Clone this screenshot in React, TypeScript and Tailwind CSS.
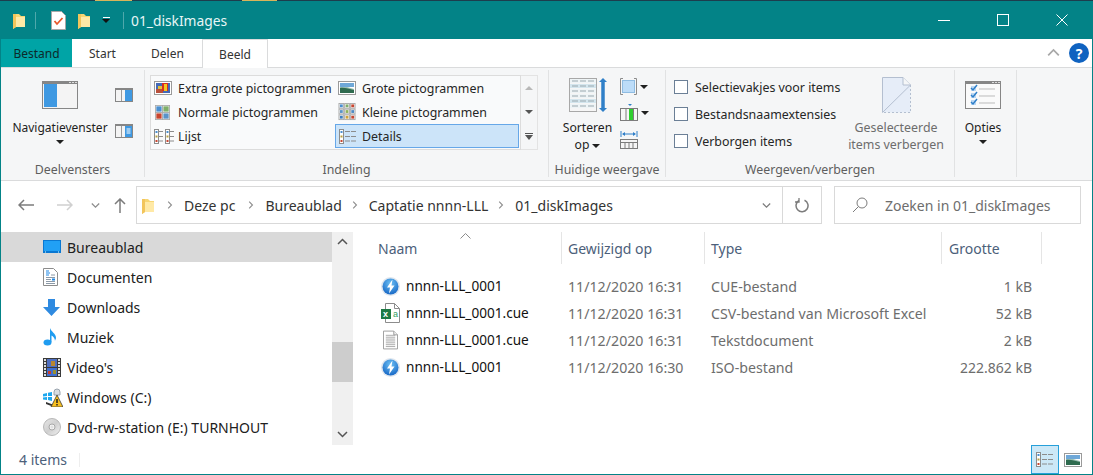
import type { ReactNode } from 'react'

const CARET = 'w-0 h-0 border-x-[4px] border-x-transparent border-t-[4px] border-t-[#202020]'

function Caret({ className = '' }: { className?: string }) {
  return <span className={`${CARET} ${className}`} />
}

function Folder({ w = 12, h = 17 }: { w?: number; h?: number }) {
  return (
    <svg width={w} height={h} viewBox="0 0 12 17" className="shrink-0">
      <path d="M0 2h6l2 2h4v11H3l-3 2z" fill="#f7d674" />
      <path d="M3 5h9v10H3z" fill="#ffe9a6" />
      <path d="M0 2h3v13l-3 2z" fill="#f2c55c" />
    </svg>
  )
}

function NavPane() {
  return (
    <svg width="36" height="28" viewBox="0 0 36 28">
      <rect x="0.5" y="0.5" width="35" height="27" fill="#f4f4f4" stroke="#868686" />
      <rect x="0" y="0" width="36" height="3" fill="#868686" />
      <rect x="27" y="1" width="2" height="1" fill="#ddd" />
      <rect x="30" y="1" width="2" height="1" fill="#ddd" />
      <rect x="33" y="1" width="2" height="1" fill="#ddd" />
      <rect x="2" y="3" width="13" height="23" fill="#3f99e2" />
    </svg>
  )
}

function PaneSmall({ lines }: { lines?: boolean }) {
  return (
    <svg width="18" height="14" viewBox="0 0 18 14">
      <rect x="0.5" y="0.5" width="17" height="13" fill="#f4f4f4" stroke="#868686" />
      <rect x="0" y="0" width="18" height="2" fill="#868686" />
      <rect x="6" y="2" width="1" height="11" fill="#9a9a9a" />
      <rect x="10" y="2" width="7" height="11" fill="#3f99e2" />
      {lines && <path d="M11.5 5h4M11.5 7h4M11.5 9h4" stroke="#fff" />}
    </svg>
  )
}

function Extra() {
  return (
    <svg width="18" height="14" viewBox="0 0 18 14">
      <rect x="0.5" y="0.5" width="17" height="13" fill="#fff" stroke="#9a9a9a" />
      <rect x="2" y="2" width="14" height="10" fill="#4469b8" />
      <rect x="2" y="8" width="7" height="4" fill="#b9503c" />
      <rect x="8" y="2" width="6" height="8" fill="#d82f1f" />
      <rect x="10" y="3" width="3" height="7" fill="#f2c81e" />
      <rect x="4" y="5" width="4" height="3" fill="#e3c13a" />
    </svg>
  )
}

function Tiles({ n }: { n: number }) {
  const colors = ['#4a8fd0', '#7fae6a', '#c8452f', '#5a93c8', '#8fb35a', '#4d8ac4', '#3f7fbf', '#d0a33a', '#c8452f']
  const size = n === 2 ? 7 : 4
  const step = n === 2 ? 8 : 6
  const cells: ReactNode[] = []
  for (let r = 0; r < n; r++) {
    for (let c = 0; c < n; c++) {
      cells.push(
        <g key={`${r}-${c}`}>
          <rect x={c * step + 0.5} y={r * step + 0.5} width={size + 1} height={size + 1} fill="#fff" stroke="#aaa" />
          <rect x={c * step + 1.5} y={r * step + 1.5} width={size - 1} height={size - 1} fill={colors[(r * n + c) % 9]} />
        </g>,
      )
    }
  }
  const dim = n === 2 ? 17 : 19
  return (
    <svg width={dim} height={dim - (n === 2 ? 2 : 1)} viewBox={`0 0 ${dim} ${dim}`}>
      {cells}
    </svg>
  )
}

function MiniCol({ x, dash }: { x: number; dash?: boolean }) {
  const cols = ['#4a8fd0', '#b8a040', '#c8452f']
  return (
    <g>
      <rect x={x + 0.5} y="0.5" width="4" height="14" fill="#fff" stroke="#8c8c8c" />
      {cols.map((c, i) => (
        <rect key={c} x={x + 1.5} y={2 + i * 4.5} width="2" height="2" fill={c} />
      ))}
      {[2.5, 7.5, 12].map((y) => (
        <path key={y} d={dash ? `M${x + 6} ${y}h5M${x + 12} ${y}h5` : `M${x + 5} ${y}h4`} stroke="#8c8c8c" />
      ))}
    </g>
  )
}

function ListIcon() {
  return (
    <svg width="20" height="15" viewBox="0 0 20 15">
      <MiniCol x={0} />
      <MiniCol x={11} />
    </svg>
  )
}

function DetailsIcon() {
  return (
    <svg width="20" height="15" viewBox="0 0 20 15">
      <MiniCol x={1} dash />
    </svg>
  )
}

function Landscape({ w = 18, h = 14 }: { w?: number; h?: number }) {
  return (
    <svg width={w} height={h} viewBox="0 0 18 14">
      <rect x="0.5" y="0.5" width="17" height="13" fill="#fff" stroke="#9a9a9a" />
      <rect x="2" y="2" width="14" height="4" fill="#6fa8d8" />
      <path d="M2 6l7 0 7 2v4H2z" fill="#9cc0b4" />
      <path d="M2 7c4-1 9 1 14 2v3H2z" fill="#2f6b4f" />
    </svg>
  )
}

function SortIcon() {
  return (
    <svg width="38" height="36" viewBox="0 0 38 36">
      <rect x="0.5" y="1.5" width="27" height="33" fill="#f6f6f6" stroke="#a8a8a8" />
      {[4, 9, 14, 19, 24, 29].map((y, i) => (
        <g key={y}>
          <rect x="1" y={y - 2} width="26" height="4" fill={i % 3 === 1 ? '#d4e6ee' : '#eef4f6'} />
          <path d={`M3 ${y}h6M11 ${y}h6M19 ${y}h6`} stroke="#9aa8ae" />
        </g>
      ))}
      <path d="M34 3v30" stroke="#2f7fc8" strokeWidth="3.500" />
      <path d="M30 5L34 1l4 4zM30 31l4 4 4-4z" fill="#2f7fc8" />
    </svg>
  )
}

function GroupBy() {
  return (
    <svg width="17" height="17" viewBox="0 0 17 17">
      <path d="M3 0.500H0.500V16.500H3M14 0.500H16.500V16.500H14" fill="none" stroke="#8c8c8c" />
      <rect x="2.500" y="2.500" width="12" height="12" fill="#bcdcf8" stroke="#8fbce2" />
    </svg>
  )
}

function AddCols() {
  return (
    <svg width="19" height="18" viewBox="0 0 19 18">
      <path d="M8 0h4l-2 2z" fill="#2f7fc8" />
      <rect x="0.5" y="4.500" width="17" height="12" fill="#f6f6f6" stroke="#7c7c7c" />
      <path d="M6 5v11M13.500 5v11" stroke="#7c7c7c" />
      <rect x="9" y="5" width="4" height="11" fill="#2fce2f" />
    </svg>
  )
}

function FitCols() {
  return (
    <svg width="18" height="18" viewBox="0 0 18 18">
      <path d="M1 0v6M17 0v6" stroke="#2f7fc8" />
      <path d="M3 3h12" stroke="#2f7fc8" />
      <path d="M2 3l3-2v4zM16 3l-3-2v4z" fill="#2f7fc8" />
      <rect x="0.5" y="8.500" width="17" height="9" fill="#f6f6f6" stroke="#7c7c7c" />
      <path d="M0 11.500h18" stroke="#7c7c7c" />
      <path d="M5 12v5M9 12v5M13 12v5" stroke="#7c7c7c" />
    </svg>
  )
}

function HideIcon() {
  return (
    <svg width="29" height="36" viewBox="0 0 29 36">
      <path d="M0.500 0.500H21l7.500 7.500V35.500H0.500z" fill="#e6edf8" />
      <path d="M28.500 8V35.500H0.500" fill="none" stroke="#b4bfd0" strokeDasharray="2 2" />
      <path d="M0.500 35.500V0.500H21l7.500 7.500L0.500 35.500" fill="none" stroke="#b4bfd0" />
      <path d="M21 0.500V8h7.500" fill="#f5f6f7" stroke="#b4bfd0" />
    </svg>
  )
}

function OptionsIcon() {
  return (
    <svg width="36" height="28" viewBox="0 0 36 28">
      <rect x="0.500" y="0.500" width="35" height="27" fill="#fafafa" stroke="#868686" />
      <rect x="0" y="0" width="36" height="3" fill="#868686" />
      <rect x="27" y="1" width="2" height="1" fill="#ddd" />
      <rect x="30" y="1" width="2" height="1" fill="#ddd" />
      <rect x="33" y="1" width="2" height="1" fill="#ddd" />
      {[7, 14, 21].map((y) => (
        <g key={y}>
          <rect x="6" y={y - 2} width="5" height="5" fill="#bcd8f4" />
          <path d={`M6 ${y}l2 2 4-5`} fill="none" stroke="#2f7fc8" strokeWidth="1.500" />
          <path d={`M14 ${y + 1}h16`} stroke="#bbb" />
        </g>
      ))}
    </svg>
  )
}

function Bolt({ id }: { id: string }) {
  return (
    <svg width="19" height="19" viewBox="0 0 19 19" className="shrink-0">
      <defs>
        <radialGradient id={id} cx="0.5" cy="0.3" r="0.8">
          <stop offset="0" stopColor="#6cc0f4" />
          <stop offset="1" stopColor="#0c5cc0" />
        </radialGradient>
      </defs>
      <circle cx="9.500" cy="9.500" r="9.500" fill="#dfe6ee" />
      <circle cx="9.500" cy="9.500" r="8" fill={`url(#${id})`} />
      <path d="M11.500 2.500L6 10.500h3L8 16.500l5.500-8h-3z" fill="#fff" />
    </svg>
  )
}

function ExcelIcon() {
  return (
    <svg width="19" height="20" viewBox="0 0 19 20" className="shrink-0">
      <path d="M4.500 0.500h9l5 5v14h-14z" fill="#fff" stroke="#8c8c8c" />
      <path d="M13.500 0.500v5h5" fill="none" stroke="#8c8c8c" />
      <rect x="0" y="6" width="10" height="10" fill="#1e7a45" />
      <text x="2" y="14" fontSize="9" fontWeight="700" fill="#fff" fontFamily="Liberation Sans">x</text>
      <text x="12" y="14" fontSize="9" fill="#2f9e5f" fontFamily="Liberation Sans">a</text>
    </svg>
  )
}

function TextIcon() {
  return (
    <svg width="15" height="20" viewBox="0 0 16 20" className="ml-[2px] shrink-0">
      <path d="M0.500 0.500h11l4 4v15h-15z" fill="#fff" stroke="#9a9a9a" />
      <path d="M11.500 0.500v4h4" fill="#eee" stroke="#9a9a9a" />
      {[5, 7, 9, 11, 13, 15, 17].map((y) => (
        <path key={y} d={`M3 ${y}h10`} stroke="#a8a8a8" />
      ))}
    </svg>
  )
}

function DesktopIcon() {
  return (
    <svg width="18" height="14" viewBox="0 0 18 14">
      <rect x="0" y="0" width="18" height="13" fill="#0a78d2" />
      <rect x="1" y="1" width="16" height="10" fill="#21a0f5" />
      <path d="M2 12h1M15 12h1" stroke="#dff" />
    </svg>
  )
}

function DocsIcon() {
  return (
    <svg width="15" height="18" viewBox="0 0 15 18">
      <path d="M0.500 0.500h10l4 4v13h-14z" fill="#fff" stroke="#8c8c8c" />
      <path d="M3 3h3M3 5h4M3 7h3" stroke="#1e88e5" />
      <path d="M8 7h4M3 9.500h9M3 11.500h5M3 13.500h9M3 15.500h9" stroke="#8c9aa8" />
      <rect x="9" y="10.500" width="3" height="2" fill="#1e88e5" />
    </svg>
  )
}

function DownArrowIcon() {
  return (
    <svg width="17" height="17" viewBox="0 0 17 17">
      <path d="M5 0h7v8h5l-8.500 9L0 8h5z" fill="#2f8ae0" />
    </svg>
  )
}

function NoteIcon() {
  return (
    <svg width="14" height="18" viewBox="0 0 14 18">
      <ellipse cx="4.500" cy="14.500" rx="4" ry="3" fill="#1f9cf0" />
      <path d="M7 14V0c1 4 6 5 6 10 0 1-1 2-1 3 0-3-2-4.500-3.500-5.500V14z" fill="#1f9cf0" />
    </svg>
  )
}

function FilmIcon() {
  return (
    <svg width="18" height="19" viewBox="0 0 18 19">
      <rect width="18" height="19" fill="#3a3a3a" />
      {[1, 4, 7, 10, 13, 16].map((y) => (
        <g key={y}>
          <rect x="1" y={y} width="2" height="2" fill="#ddd" />
          <rect x="15" y={y} width="2" height="2" fill="#ddd" />
        </g>
      ))}
      <rect x="4" y="1" width="10" height="8" fill="#4f6fc0" />
      <rect x="8" y="3" width="4" height="5" fill="#b8862f" />
      <rect x="4" y="10" width="10" height="8" fill="#3f6fd0" />
      <rect x="5" y="13" width="3" height="3" fill="#c83f2f" />
      <rect x="10" y="12" width="3" height="4" fill="#9a8f30" />
    </svg>
  )
}

function DriveIcon() {
  return (
    <svg width="20" height="19" viewBox="0 0 20 19">
      <path d="M0 6l4-1v3l-4 .5zM5 4.800l4-.8v4H5zM0 9.500l4-.5v3l-4-.5zM5 9h4v4l-4-1z" fill="#1ea7ee" />
      <path d="M3 14l8 3v2l-8-3z" fill="#333" />
      <path d="M11 4a3 3 0 0 1 6 0v3h-6z" fill="#d8dde2" stroke="#9aa4ae" />
      <path d="M14 7l6 12H8z" fill="#f8c020" stroke="#3a3a3a" strokeWidth="0.800" />
      <path d="M14 11v4M14 16v1.500" stroke="#222" strokeWidth="1.500" />
    </svg>
  )
}

function DiscIcon() {
  return (
    <svg width="18" height="18" viewBox="0 0 18 18">
      <defs>
        <linearGradient id="discFill" x1="0" y1="0" x2="1" y2="1">
          <stop offset="0" stopColor="#e8e8e8" />
          <stop offset="0.500" stopColor="#cfcfcf" />
          <stop offset="1" stopColor="#f2f2f2" />
        </linearGradient>
      </defs>
      <circle cx="9" cy="9" r="8.500" fill="url(#discFill)" stroke="#b8b8b8" />
      <circle cx="9" cy="9" r="3" fill="#f4f4f4" stroke="#a8a8a8" />
      <circle cx="9" cy="9" r="1" fill="#fff" stroke="#bbb" strokeWidth="0.500" />
    </svg>
  )
}

function Chevron({ dir, color = '#6d6d6d', size = 9 }: { dir: 'up' | 'down' | 'right'; color?: string; size?: number }) {
  const d = dir === 'up' ? 'M1 7l4.500-4.500L10 7' : dir === 'down' ? 'M1 3l4.500 4.500L10 3' : 'M3 1l4.500 4.500L3 10'
  return (
    <svg width={size} height={size} viewBox="0 0 11 11" className="shrink-0">
      <path d={d} fill="none" stroke={color} strokeWidth="1.500" />
    </svg>
  )
}

function RibbonGroup({ width, label, children }: { width: string; label: string; children: ReactNode }) {
  return (
    <div className={`${width} h-[107px] flex flex-col border-r border-[#e1e2e3] shrink-0`}>
      <div className="flex-1 flex min-h-0">{children}</div>
      <div className="h-[16px] pt-[2px] flex items-center justify-center text-[12.35px] text-[#5e5e5e] whitespace-nowrap">{label}</div>
    </div>
  )
}

function GalleryItem({ icon, label, selected }: { icon: ReactNode; label: string; selected?: boolean }) {
  return (
    <div className={`h-[24px] flex items-center border ${selected ? 'bg-[#cce4f9] border-[#66a7e8]' : 'border-transparent'}`}>
      <div className="w-[26px] flex items-center pl-[2px]">{icon}</div>
      <span className="pt-[2px] whitespace-nowrap text-[12.4px] text-[#262626]">{label}</span>
    </div>
  )
}

const NAV = [
  { icon: <DesktopIcon />, label: 'Bureaublad', active: true },
  { icon: <DocsIcon />, label: 'Documenten' },
  { icon: <DownArrowIcon />, label: 'Downloads' },
  { icon: <NoteIcon />, label: 'Muziek' },
  { icon: <FilmIcon />, label: "Video's" },
  { icon: <DriveIcon />, label: 'Windows (C:)' },
  { icon: <DiscIcon />, label: 'Dvd-rw-station (E:) TURNHOUT' },
]

const FILES = [
  { icon: <Bolt id="boltA" />, name: 'nnnn-LLL_0001', date: '11/12/2020 16:31', type: 'CUE-bestand', size: '1 kB' },
  { icon: <ExcelIcon />, name: 'nnnn-LLL_0001.cue', date: '11/12/2020 16:31', type: 'CSV-bestand van Microsoft Excel', size: '52 kB' },
  { icon: <TextIcon />, name: 'nnnn-LLL_0001.cue', date: '11/12/2020 16:31', type: 'Tekstdocument', size: '2 kB' },
  { icon: <Bolt id="boltB" />, name: 'nnnn-LLL_0001', date: '11/12/2020 16:30', type: 'ISO-bestand', size: '222.862 kB' },
]

const CRUMBS = ['Deze pc', 'Bureaublad', 'Captatie nnnn-LLL', '01_diskImages']

export default function App() {
  return (
    <div className="w-[1093px] h-[475px] flex flex-col overflow-hidden bg-[#038387] font-['Noto_Sans',sans-serif] text-[12px] text-[#1e1e1e]">
      {/* window behind this one peeks through on the top row */}
      <div className="h-px flex shrink-0 bg-[#1d3d4d]">
        <div className="w-[95px]" />
        <div className="w-[37px] bg-[#d8b45a]" />
        <div className="w-[110px]" />
        <div className="w-[35px] bg-[#d8b45a]" />
      </div>

      <div className="flex-1 min-h-0 flex flex-col border-x border-b border-[#038387]">
        {/* title bar */}
        <div className="h-[38px] shrink-0 flex items-center text-white">
          <div className="ml-[12px]"><Folder /></div>
          <div className="ml-[10px] w-px h-[17px] bg-[#4fa8ab]" />
          <svg width="15" height="19" viewBox="0 0 15 19" className="ml-[15px]">
            <path d="M0.500 0.500h10l4 4v14h-14z" fill="#fff" stroke="#a8a8a8" />
            <path d="M3.500 10l2.500 3 5.500-6" fill="none" stroke="#e8572a" strokeWidth="1.800" />
          </svg>
          <div className="ml-[12px]"><Folder /></div>
          <div className="ml-[12px] flex flex-col items-center gap-[1px]">
            <div className="w-[7px] h-px bg-white" />
            <div className="w-0 h-0 border-x-[4px] border-x-transparent border-t-[4px] border-t-[#111]" />
          </div>
          <div className="ml-[13px] w-px h-[17px] bg-[#4fa8ab]" />
          <span className="ml-[7px] pt-[2px] text-[13.8px] text-[#e8f6f6]">01_diskImages</span>
          <div className="flex-1" />
          <div className="w-[12px] h-px bg-white mr-[47px]" />
          <div className="w-[12px] h-[12px] border border-white mr-[47px]" />
          <svg width="12" height="12" viewBox="0 0 12 12" className="mr-[24px]">
            <path d="M0.500 0.500l11 11M11.500 0.500l-11 11" stroke="#fff" />
          </svg>
        </div>

        {/* tabs */}
        <div className="h-[29px] shrink-0 flex bg-white border-b border-[#dadbdc]">
          <div className="w-[71px] pt-[2px] bg-[#00a4a6] flex items-center justify-center text-[#0c2a2a]">Bestand</div>
          <div className="w-[61px] pt-[2px] flex items-center justify-center text-[#333]">Start</div>
          <div className="w-[69px] pt-[2px] flex items-center justify-center text-[#333]">Delen</div>
          <div className="w-[66px] pt-[2px] mb-[-1px] relative bg-white border-x border-t border-[#dadbdc] flex items-center justify-center text-[#333]">Beeld</div>
          <div className="flex-1" />
          <div className="flex items-center mr-[3px] gap-[9px]">
            <Chevron dir="up" color="#a8a8a8" size={13} />
            <div className="w-[20px] h-[20px] rounded-full bg-[#0f62c0] flex items-center justify-center text-white font-bold text-[14px]">?</div>
          </div>
        </div>

        {/* ribbon */}
        <div className="h-[113px] shrink-0 bg-[#f5f6f7] border-b border-[#dadbdc] pt-[2px] flex">
          <RibbonGroup width="w-[144px]" label="Deelvensters">
            <div className="ml-[4px] w-[110px] flex flex-col items-center pt-[11px]">
              <NavPane />
              <span className="mt-[10px] h-[18px] flex items-center">Navigatievenster</span>
              <Caret className="mt-[3px]" />
            </div>
            <div className="pt-[18px] flex flex-col gap-[22px]">
              <PaneSmall />
              <PaneSmall lines />
            </div>
          </RibbonGroup>

          <RibbonGroup width="w-[404px]" label="Indeling">
            <div className="ml-[5px] mt-[5px] h-[75px] flex">
              <div className="w-[371px] border border-[#dcdcdc] bg-[#f9fafb] grid grid-cols-[184px_184px] content-start">
                <GalleryItem icon={<Extra />} label="Extra grote pictogrammen" />
                <GalleryItem icon={<Landscape />} label="Grote pictogrammen" />
                <GalleryItem icon={<Tiles n={2} />} label="Normale pictogrammen" />
                <GalleryItem icon={<Tiles n={3} />} label="Kleine pictogrammen" />
                <GalleryItem icon={<ListIcon />} label="Lijst" />
                <GalleryItem icon={<DetailsIcon />} label="Details" selected />
              </div>
              <div className="w-[17px] border border-l-0 border-[#e3e3e3] flex flex-col items-center">
                <div className="flex-1 flex items-center"><div className="w-0 h-0 border-x-[4px] border-x-transparent border-b-[4px] border-b-[#b8b8b8]" /></div>
                <div className="flex-1 flex items-center"><div className="w-0 h-0 border-x-[4px] border-x-transparent border-t-[4px] border-t-[#555]" /></div>
                <div className="flex-1 flex flex-col items-center justify-center gap-[1px]">
                  <div className="w-[8px] h-px bg-[#555]" />
                  <div className="w-0 h-0 border-x-[4px] border-x-transparent border-t-[5px] border-t-[#555]" />
                </div>
              </div>
            </div>
          </RibbonGroup>

          <RibbonGroup width="w-[117px]" label="Huidige weergave">
            <div className="ml-[6px] w-[65px] flex flex-col items-center pt-[7px]">
              <SortIcon />
              <span className="mt-[6px] h-[18px] flex items-center text-[12.2px]">Sorteren</span>
              <span className="h-[17px] flex items-center gap-[3px] text-[12.2px]">op <Caret /></span>
            </div>
            <div className="pt-[8px] flex flex-col gap-[9px]">
              <div className="flex items-center gap-[3px]"><GroupBy /><Caret /></div>
              <div className="flex items-center gap-[2px]"><AddCols /><Caret /></div>
              <div className="flex items-center"><FitCols /></div>
            </div>
          </RibbonGroup>

          <RibbonGroup width="w-[289px]" label="Weergeven/verbergen">
            <div className="pl-[8px] pt-[10px] w-[184px] flex flex-col gap-[13px]">
              {['Selectievakjes voor items', 'Bestandsnaamextensies', 'Verborgen items'].map((t) => (
                <div key={t} className="h-[14px] flex items-center gap-[7px] whitespace-nowrap text-[12.4px] text-[#262626]">
                  <span className="w-[14px] h-[14px] border border-[#6b7f96] bg-white shrink-0" />
                  <span className="pt-[2px]">{t}</span>
                </div>
              ))}
            </div>
            <div className="w-[92px] flex flex-col items-center pt-[7px] text-[12.4px] text-[#6d6d6d]">
              <HideIcon />
              <span className="mt-[6px] h-[18px] flex items-center whitespace-nowrap">Geselecteerde</span>
              <span className="h-[17px] flex items-center whitespace-nowrap">items verbergen</span>
            </div>
          </RibbonGroup>

          <RibbonGroup width="w-[62px]" label="">
            <div className="w-[56px] flex flex-col items-center pt-[11px]">
              <OptionsIcon />
              <span className="mt-[10px] h-[18px] flex items-center">Opties</span>
              <Caret className="mt-[3px]" />
            </div>
          </RibbonGroup>
        </div>

        {/* address row */}
        <div className="h-[51px] shrink-0 bg-white flex pt-[5px]">
          <div className="w-[135px] h-[38px] flex items-center">
            <svg width="16" height="12" viewBox="0 0 16 12" className="ml-[17px]">
              <path d="M16 6H1M6 1L1 6l5 5" fill="none" stroke="#7c7c7c" strokeWidth="1.500" />
            </svg>
            <svg width="16" height="12" viewBox="0 0 16 12" className="ml-[23px]">
              <path d="M0 6h15M10 1l5 5-5 5" fill="none" stroke="#d0d0d0" strokeWidth="1.500" />
            </svg>
            <div className="ml-[18px]"><Chevron dir="down" color="#8c8c8c" /></div>
            <svg width="12" height="15" viewBox="0 0 12 15" className="ml-[14px]">
              <path d="M6 15V1M1 6l5-5 5 5" fill="none" stroke="#7c7c7c" strokeWidth="1.500" />
            </svg>
          </div>
          <div className="w-[686px] h-[38px] border border-[#d9d9d9] flex items-center">
            <div className="ml-[5px]"><Folder /></div>
            <div className="ml-[12px] flex items-center text-[14px] text-[#333] whitespace-nowrap">
              {CRUMBS.map((c) => (
                <div key={c} className="flex items-center">
                  <Chevron dir="right" color="#8c8c8c" size={8} />
                  <span className={`ml-[10px] ${c === 'Deze pc' ? 'mr-[12px]' : 'mr-[9px]'}`}>{c}</span>
                </div>
              ))}
            </div>
            <div className="flex-1" />
            <div className="mr-[11px]"><Chevron dir="down" color="#7c7c7c" /></div>
            <div className="w-[39px] h-full border-l border-[#d9d9d9] flex items-center justify-center">
              <svg width="15" height="15" viewBox="0 0 15 15">
                <path d="M9.500 2.200A6 6 0 1 1 4 2.500" fill="none" stroke="#7c7c7c" strokeWidth="1.500" />
                <path d="M4 0v4H0" fill="none" stroke="#7c7c7c" strokeWidth="1.300" />
              </svg>
            </div>
          </div>
          <div className="ml-[12px] w-[247px] h-[38px] border border-[#d9d9d9] flex items-center">
            <svg width="16" height="16" viewBox="0 0 16 16" className="ml-[17px]">
              <circle cx="10" cy="6" r="5" fill="none" stroke="#7c7c7c" />
              <path d="M6.500 9.500L1 15" stroke="#7c7c7c" />
            </svg>
            <span className="ml-[17px] text-[14px] text-[#6d6d6d]">Zoeken in 01_diskImages</span>
          </div>
        </div>

        {/* navigation + file list */}
        <div className="flex-1 min-h-0 bg-white flex">
          <div className="w-[331px] shrink-0 flex flex-col">
            {NAV.map((n) => (
              <div key={n.label} className={`h-[30px] flex items-center text-[14px] ${n.active ? 'bg-[#d9d9d9]' : ''}`}>
                <div className="w-[66px] pl-[42px] flex items-center justify-start">{n.icon}</div>
                <span className="whitespace-nowrap text-[#202020]">{n.label}</span>
              </div>
            ))}
          </div>
          <div className="w-[21px] shrink-0 bg-[#f0f0f0] flex flex-col">
            <div className="h-[21px] flex items-center justify-center"><Chevron dir="up" color="#555" size={11} /></div>
            <div className="h-[89px]" />
            <div className="h-[40px] bg-[#cdcdcd]" />
            <div className="flex-1" />
            <div className="h-[21px] flex items-center justify-center"><Chevron dir="down" color="#555" size={11} /></div>
          </div>
          <div className="flex-1 min-w-0 flex flex-col">
            <div className="h-[32px] shrink-0 flex text-[14px] text-[#4c607a]">
              <div className="w-[209px] relative border-r border-[#e5e5e5] pl-[25px] flex items-center">
                Naam
                <svg width="11" height="6" viewBox="0 0 11 6" className="absolute left-[107px] top-px">
                  <path d="M0.500 5.500l5-5 5 5" fill="none" stroke="#8c8c8c" />
                </svg>
              </div>
              <div className="w-[143px] border-r border-[#e5e5e5] pl-[6px] flex items-center">Gewijzigd op</div>
              <div className="w-[237px] border-r border-[#e5e5e5] pl-[6px] flex items-center">Type</div>
              <div className="w-[100px] border-r border-[#e5e5e5] pl-[7px] flex items-center">Grootte</div>
            </div>
            <div className="mt-[9px] flex flex-col">
              {FILES.map((f, i) => (
                <div key={i} className="h-[27px] flex items-center text-[14.2px]">
                  <div className="w-[209px] pl-[28px] flex items-center">
                    <div className="w-[25px] flex items-center">{f.icon}</div>
                    <span className="text-[13.6px] text-[#111] whitespace-nowrap">{f.name}</span>
                  </div>
                  <div className="w-[143px] pl-[6px] text-[#6d6d6d] whitespace-nowrap">{f.date}</div>
                  <div className="w-[237px] pl-[6px] text-[#6d6d6d] whitespace-nowrap">{f.type}</div>
                  <div className="w-[90px] text-right text-[14px] text-[#6d6d6d] whitespace-nowrap">{f.size}</div>
                </div>
              ))}
            </div>
          </div>
        </div>

        {/* status bar */}
        <div className="h-[29px] shrink-0 bg-white flex items-center text-[14px] text-[#4c607a]">
          <span className="ml-[18px] w-[60px]">4 items</span>
          <div className="w-px h-[14px] bg-[#eee]" />
          <div className="flex-1" />
          <div className="w-[28px] h-full bg-[#cce8f7] border border-[#26a0da] flex items-center justify-center">
            <DetailsIcon />
          </div>
          <div className="ml-[5px] mr-[10px]"><Landscape /></div>
        </div>
      </div>
    </div>
  )
}
